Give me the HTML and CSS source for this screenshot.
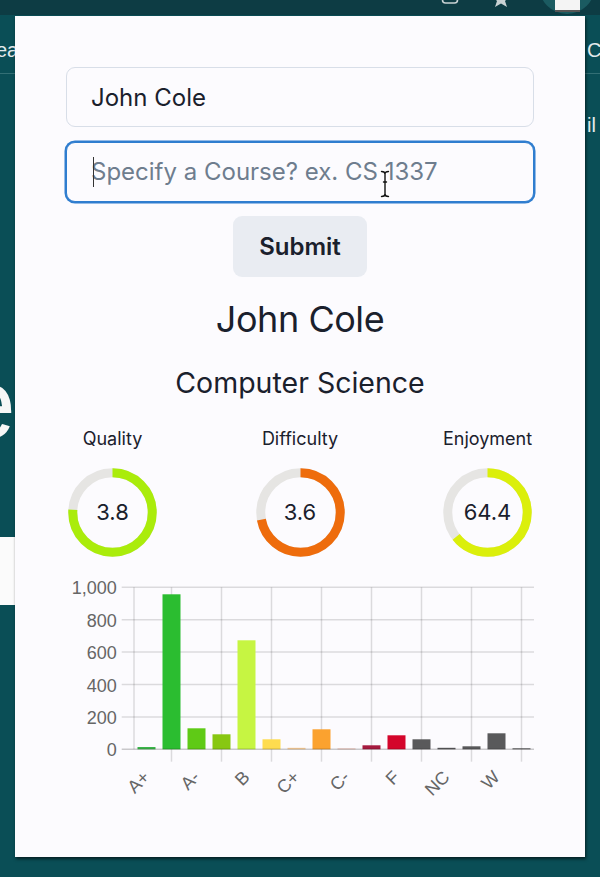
FILE: index.html
```html
<!DOCTYPE html>
<html lang="en">
<head>
<meta charset="utf-8">
<title>Grade lookup</title>
<link rel="stylesheet" href="styles.css">
</head>
<body>
<div class="backdrop">
  <div class="topbar">
    <svg class="tb-icon tb-rect" width="18" height="15" viewBox="0 0 18 15"><rect x="1.5" y="-10" width="15" height="13" rx="3" fill="none" stroke="#c9d2d4" stroke-width="1.6"/></svg>
    <svg class="tb-icon tb-star" width="18" height="15" viewBox="0 0 18 15"><path d="M9 -12 L12 -3 L17 -3 L13 1 L15 7 L9 3.5 L3 7 L5 1 L1 -3 L6 -3 Z" fill="#c9d2d4"/></svg>
    <div class="avatar"><div class="avatar-img"></div></div>
  </div>
  <div class="nav">
    <span class="nav-left">ead</span>
    <span class="nav-right">CS</span>
  </div>
  <div class="rule"></div>
  <div class="side-row"><span></span><span class="side-right">il</span></div>
  <div class="hero-e">e</div>
  <div class="side-box"></div>
</div>

<div class="modal">
  <div class="field">
    <input class="input" type="text" value="John Cole">
  </div>
  <div class="field field-course">
    <input class="input input-focus" type="text" placeholder="Specify a Course? ex. CS 1337">
    <span class="caret"></span>
    <svg class="ibeam" width="10" height="28" viewBox="0 0 10 28"><path d="M1.5 1.5 Q5 1.5 5 4 Q5 1.5 8.5 1.5 M5 4 L5 24 M1.5 26.5 Q5 26.5 5 24 Q5 26.5 8.5 26.5" fill="none" stroke="#fff" stroke-width="3.2" stroke-linecap="round"/><path d="M1.5 1.5 Q5 1.5 5 4 Q5 1.5 8.5 1.5 M5 4 L5 24 M1.5 26.5 Q5 26.5 5 24 Q5 26.5 8.5 26.5 M3.5 12 L6.5 12" fill="none" stroke="#111" stroke-width="1.4" stroke-linecap="round"/></svg>
  </div>
  <button class="submit" type="button">Submit</button>

  <h1 class="name">John Cole</h1>
  <h2 class="dept">Computer Science</h2>

  <div class="stats">
    <div class="stat">
      <div class="stat-label">Quality</div>
      <div class="donut">
        <svg width="89" height="89" viewBox="0 0 89 89"><circle cx="44.5" cy="44.5" r="39.75" fill="none" stroke="#e6e5e3" stroke-width="9"/><circle cx="44.5" cy="44.5" r="39.75" fill="none" stroke="#aaec0b" stroke-width="9" stroke-dasharray="189.8 300" transform="rotate(-90 44.5 44.5)"/></svg>
        <span class="donut-value">3.8</span>
      </div>
    </div>
    <div class="stat">
      <div class="stat-label">Difficulty</div>
      <div class="donut">
        <svg width="89" height="89" viewBox="0 0 89 89"><circle cx="44.5" cy="44.5" r="39.75" fill="none" stroke="#e6e5e3" stroke-width="9"/><circle cx="44.5" cy="44.5" r="39.75" fill="none" stroke="#ee6c0c" stroke-width="9" stroke-dasharray="179.8 300" transform="rotate(-90 44.5 44.5)"/></svg>
        <span class="donut-value">3.6</span>
      </div>
    </div>
    <div class="stat">
      <div class="stat-label">Enjoyment</div>
      <div class="donut">
        <svg width="89" height="89" viewBox="0 0 89 89"><circle cx="44.5" cy="44.5" r="39.75" fill="none" stroke="#e6e5e3" stroke-width="9"/><circle cx="44.5" cy="44.5" r="39.75" fill="none" stroke="#dbef0b" stroke-width="9" stroke-dasharray="160.8 300" transform="rotate(-90 44.5 44.5)"/></svg>
        <span class="donut-value">64.4</span>
      </div>
    </div>
  </div>

  <svg class="chart" width="468" height="240" viewBox="0 0 468 240">
    <g class="grid" stroke="rgba(0,0,0,0.13)" stroke-width="1.5">
      <line x1="55.7" y1="17.3" x2="468" y2="17.3"/>
      <line x1="55.7" y1="49.7" x2="468" y2="49.7"/>
      <line x1="55.7" y1="82.1" x2="468" y2="82.1"/>
      <line x1="55.7" y1="114.5" x2="468" y2="114.5"/>
      <line x1="55.7" y1="146.9" x2="468" y2="146.9"/>
      <line x1="68" y1="17.3" x2="68" y2="179.3"/>
      <line x1="105.5" y1="17.3" x2="105.5" y2="191.7"/>
      <line x1="155.5" y1="17.3" x2="155.5" y2="191.7"/>
      <line x1="205.5" y1="17.3" x2="205.5" y2="191.7"/>
      <line x1="255.5" y1="17.3" x2="255.5" y2="191.7"/>
      <line x1="305.5" y1="17.3" x2="305.5" y2="191.7"/>
      <line x1="355.5" y1="17.3" x2="355.5" y2="191.7"/>
      <line x1="405.5" y1="17.3" x2="405.5" y2="191.7"/>
      <line x1="455.5" y1="17.3" x2="455.5" y2="191.7"/>
    </g>
    <g class="bars">
      <rect x="71.5" y="177" width="18" height="2.3" fill="#3bb54a"/>
      <rect x="96.5" y="24.3" width="18" height="155" fill="#2bbd30"/>
      <rect x="121.5" y="158.3" width="18" height="21" fill="#5fca16"/>
      <rect x="146.5" y="164.3" width="18" height="15" fill="#88c712"/>
      <rect x="171.5" y="70.3" width="18" height="109" fill="#c6f542"/>
      <rect x="196.5" y="169.3" width="18" height="10" fill="#fedc4f"/>
      <rect x="221.5" y="177.8" width="18" height="1.5" fill="#fcd09a"/>
      <rect x="246.5" y="159.3" width="18" height="20" fill="#fba22f"/>
      <rect x="271.5" y="178.5" width="18" height="0.8" fill="#ecb9a9"/>
      <rect x="296.5" y="175.3" width="18" height="4" fill="#a61a3f"/>
      <rect x="321.5" y="165.3" width="18" height="14" fill="#d4052b"/>
      <rect x="346.5" y="169.3" width="18" height="10" fill="#59595b"/>
      <rect x="371.5" y="177.8" width="18" height="1.5" fill="#59595b"/>
      <rect x="396.5" y="176.3" width="18" height="3" fill="#59595b"/>
      <rect x="421.5" y="163.3" width="18" height="16" fill="#59595b"/>
      <rect x="446.5" y="178.3" width="18" height="1" fill="#59595b"/>
    </g>
    <line x1="55.7" y1="179.3" x2="468" y2="179.3" stroke="rgba(0,0,0,0.2)" stroke-width="1.5"/>
    <g class="ticks" fill="#666" text-anchor="end" dominant-baseline="central">
      <text x="50.7" y="18.3">1,000</text>
      <text x="50.7" y="50.7">800</text>
      <text x="50.7" y="83.1">600</text>
      <text x="50.7" y="115.5">400</text>
      <text x="50.7" y="147.9">200</text>
      <text x="50.7" y="180.3">0</text>
    </g>
    <g class="ticks" fill="#666" text-anchor="end" dominant-baseline="central">
      <text transform="translate(80.5 204) rotate(-45)">A+</text>
      <text transform="translate(130.5 204) rotate(-45)">A-</text>
      <text transform="translate(180.5 204) rotate(-45)">B</text>
      <text transform="translate(230.5 204) rotate(-45)">C+</text>
      <text transform="translate(280.5 204) rotate(-45)">C-</text>
      <text transform="translate(330.5 204) rotate(-45)">F</text>
      <text transform="translate(380.5 204) rotate(-45)">NC</text>
      <text transform="translate(430.5 204) rotate(-45)">W</text>
    </g>
  </svg>
</div>
</body>
</html>
```
FILE: styles.css
```css
* { box-sizing: border-box; }

html, body {
  margin: 0;
  height: 100%;
}

body {
  background: #0a4e56;
  font-family: Inter, "Noto Sans", sans-serif;
  overflow: hidden;
  position: relative;
  color: #1a202c;
}

/* ---------- page behind the popup ---------- */
.backdrop {
  display: flex;
  flex-direction: column;
  color: #e3eaec;
  font-family: "Liberation Sans", Arial, sans-serif;
}

.topbar {
  height: 15px;
  background: #0d3c44;
  display: flex;
  justify-content: flex-end;
  align-items: flex-end;
  overflow: hidden;
  padding-right: 5px;
}

.tb-icon { flex-shrink: 0; }
.tb-rect { margin-right: 33px; }
.tb-star { margin-right: 29px; }

.avatar {
  flex-shrink: 0;
  width: 56px;
  height: 56px;
  border-radius: 50%;
  background: #1b5b61;
  margin-bottom: 1px;
  display: flex;
  align-items: flex-end;
  justify-content: center;
}

.avatar-img {
  width: 25px;
  height: 12px;
  margin-bottom: 2px;
  background: #f4f4f4;
  border-bottom: 2px solid #555;
}

.nav {
  height: 58px;
  display: grid;
  grid-template-columns: 587px 1fr;
  align-items: end;
  padding-bottom: 11px;
  font-size: 20px;
  line-height: 24px;
}

.nav-left { margin-left: -4px; }

.rule {
  height: 1px;
  background: #336f75;
}

.side-row {
  margin-top: 39px;
  display: grid;
  grid-template-columns: 587px 1fr;
  font-size: 20px;
  line-height: 24px;
}

.hero-e {
  margin-top: 216px;
  margin-left: -40px;
  font-size: 100px;
  line-height: 100px;
  color: #f7f7f7;
}

.side-box {
  margin-top: 84px;
  width: 15px;
  height: 68px;
  background: #fbfbfb;
}

/* ---------- popup ---------- */
.modal {
  position: absolute;
  left: 15px;
  top: 16px;
  width: 570px;
  height: 841px;
  background: #fcfbfe;
  box-shadow: 1px 2px 3px rgba(0, 0, 0, 0.6);
  padding: 51px 51px 0;
  display: flex;
  flex-direction: column;
  align-items: stretch;
}

.field {
  position: relative;
}

.field-course {
  margin-top: 14.5px;
}

.input {
  display: block;
  width: 100%;
  height: 60px;
  border: 1.5px solid #d8dee8;
  border-radius: 9px;
  background: #fcfbfe;
  padding: 0 24px;
  font-family: Inter, "Noto Sans", sans-serif;
  font-size: 24px;
  color: #1a202c;
  outline: none;
}

.input::placeholder {
  color: #6e7d8e;
  opacity: 1;
}

.input-focus {
  border-color: #2f7dcf;
  box-shadow: 0 0 0 1.5px #2f7dcf;
}

.caret {
  position: absolute;
  left: 26.5px;
  top: 15px;
  width: 1.6px;
  height: 30px;
  background: #333;
}

.ibeam {
  position: absolute;
  left: 314px;
  top: 28px;
}

.submit {
  align-self: center;
  margin-top: 14.5px;
  width: 134px;
  height: 61px;
  border: none;
  border-radius: 9px;
  background: #e9ecf2;
  font-family: Inter, "Noto Sans", sans-serif;
  font-size: 24px;
  font-weight: 600;
  color: #1a202c;
  padding: 0;
}

.name {
  margin: 21px 0 0;
  text-align: center;
  font-size: 36px;
  line-height: 1.2;
  font-weight: 400;
  letter-spacing: -0.45px;
}

.dept {
  margin: 25px 0 0;
  text-align: center;
  font-size: 28.5px;
  line-height: 1.2;
  font-weight: 400;
}

.stats {
  margin-top: 28px;
  display: grid;
  grid-template-columns: repeat(3, 93px);
  justify-content: space-between;
}

.stat {
  display: flex;
  flex-direction: column;
  align-items: center;
  gap: 18px;
}

.stat-label {
  font-size: 18px;
  line-height: 21.6px;
  white-space: nowrap;
}

.donut {
  display: grid;
  place-items: center;
  width: 89px;
  height: 89px;
}

.donut svg,
.donut-value {
  grid-area: 1 / 1;
}

.donut svg { display: block; }

.donut-value {
  font-size: 22px;
  line-height: 1;
}

.chart {
  display: block;
  margin-top: 12.7px;
  overflow: visible;
}

.ticks {
  font-family: "Liberation Sans", Arial, sans-serif;
  font-size: 18px;
}
```
